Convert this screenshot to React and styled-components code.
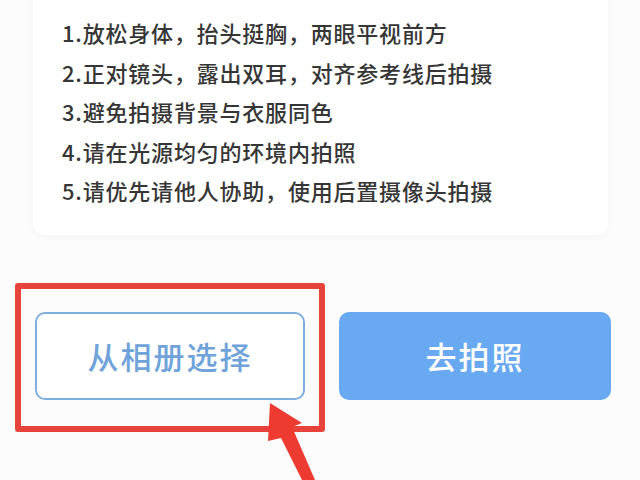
import { createGlobalStyle, styled } from 'styled-components';

const tips = [
  '1.放松身体，抬头挺胸，两眼平视前方',
  '2.正对镜头，露出双耳，对齐参考线后拍摄',
  '3.避免拍摄背景与衣服同色',
  '4.请在光源均匀的环境内拍照',
  '5.请优先请他人协助，使用后置摄像头拍摄',
];

export default function App() {
  return (
    <>
      <GlobalStyle />
      <Page>
        <Card>
          {tips.map((tip) => (
            <Tip key={tip}>{tip}</Tip>
          ))}
        </Card>
        <Actions>
          <Button $variant='outline'>从相册选择</Button>
          <Button>去拍照</Button>
        </Actions>
        <Highlight />
        <Arrow viewBox='0 0 640 480'>
          <polygon points='270,403 302,423 292,427 315,480 302,480 281,438 268,441' fill='#ee3b32' />
        </Arrow>
      </Page>
    </>
  );
}

const GlobalStyle = createGlobalStyle`
  html, body {
    margin: 0;
    padding: 0;
    background: #fcfcfd;
  }

  body {
    font-family: "Noto Sans CJK SC", "Noto Sans", sans-serif;
  }
`;

const Page = styled.div`
  position: relative;
  width: 640px;
  height: 480px;
  overflow: hidden;
`;

const Card = styled.div`
  margin: -16px 32px 0 33px;
  padding: 29px 20px 24px 29px;
  background: #fff;
  border-radius: 12px;
  box-shadow: 0 2px 10px rgba(0, 0, 0, 0.035);
`;

const Tip = styled.div`
  font-size: 22px;
  font-weight: 500;
  letter-spacing: 0.8px;
  line-height: 39.5px;
  color: #363636;
  white-space: nowrap;
`;

const Actions = styled.div`
  display: grid;
  grid-template-columns: 270px 272px;
  gap: 34px;
  margin: 77px 0 0 35px;
`;

const Button = styled.div`
  box-sizing: border-box;
  height: 88px;
  display: flex;
  align-items: center;
  justify-content: center;
  border-radius: 10px;
  font-size: 31px;
  letter-spacing: 2px;
  font-weight: 500;
  ${({ $variant }) =>
    $variant === 'outline'
      ? `
    border: 2px solid #80aedf;
    background: #fff;
    color: #6fa3da;
  `
      : `
    background: #69a9f2;
    color: #fff;
  `}
`;

const Highlight = styled.div`
  position: absolute;
  left: 15px;
  top: 283px;
  width: 310px;
  height: 149px;
  box-sizing: border-box;
  border: 6px solid #e8433b;
  border-radius: 3px;
`;

const Arrow = styled.svg`
  position: absolute;
  left: 0;
  top: 0;
  width: 640px;
  height: 480px;
`;
